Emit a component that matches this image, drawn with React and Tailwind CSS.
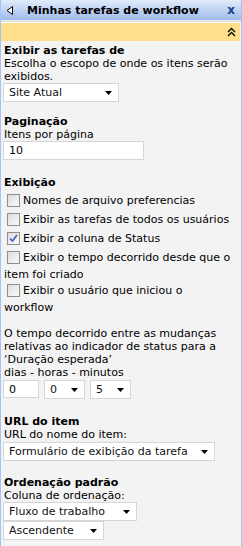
import React from 'react';

const font = { fontFamily: '"DejaVu Sans", Verdana, sans-serif' };

function Select({ value, className }) {
  return (
    <div className={`flex items-center justify-between bg-white border border-[#d6d6d6] h-[19px] pl-[5px] pr-[6px] ${className}`}>
      <span className="text-[11px] leading-[13px] text-[#111]">{value}</span>
      <svg width="7" height="4" viewBox="0 0 7 4" className="block shrink-0">
        <path d="M0 0 H7 L3.5 4 Z" fill="#000" />
      </svg>
    </div>
  );
}

function Checkbox({ checked }) {
  return (
    <span className="inline-block shrink-0 w-[13px] h-[13px] ml-[4px] mr-[3px] border border-[#8e8f8f] bg-gradient-to-br from-[#dcdcdc] to-[#fbfbfb] relative">
      {checked && (
        <svg width="11" height="11" viewBox="0 0 11 11" className="absolute left-0 top-0">
          <path d="M2 5.5 L4.5 8 L9 2" stroke="#3f5fb4" strokeWidth="1.6" fill="none" />
        </svg>
      )}
    </span>
  );
}

const options = [
  { label: 'Nomes de arquivo preferencias', checked: false },
  { label: 'Exibir as tarefas de todos os usuários', checked: false },
  { label: 'Exibir a coluna de Status', checked: true },
  { label: 'Exibir o tempo decorrido desde que o', more: 'item foi criado', checked: false },
  { label: 'Exibir o usuário que iniciou o', more: 'workflow', checked: false },
];

export default function App() {
  return (
    <div style={font} className="w-[242px] h-[546px] bg-[#f3f3f3] border-x border-[#a3c2f5] text-black overflow-hidden">
      {/* Title bar */}
      <div className="h-[20px] flex items-center bg-gradient-to-b from-[#e2ebfb] to-[#9fbbea] pl-[5px] pr-[6px]">
        <svg width="8" height="9" viewBox="0 0 8 9" className="block">
          <path d="M6.5 0.5 L1 4.5 L6.5 8.5 Z" fill="#fff" stroke="#000" strokeWidth="1" />
        </svg>
        <span className="ml-[13px] text-[11px] font-bold leading-[13px]">Minhas tarefas de workflow</span>
        <span className="ml-auto text-[12px] font-bold leading-[13px] text-[#1d3c8e]">x</span>
      </div>
      <div className="h-[3px] bg-[#e4e4e4] border-b border-[#fafafa]" />
      {/* Yellow header */}
      <div className="h-[18px] mr-[1px] bg-[#ffde8c] flex items-center justify-end pr-[4px]">
        <svg width="9" height="10" viewBox="0 0 9 10" className="block">
          <path d="M1 5 L4.5 1.5 L8 5 M1 9 L4.5 5.5 L8 9" stroke="#000" strokeWidth="1.3" fill="none" />
        </svg>
      </div>

      <div className="px-[2px] text-[11px] leading-[13px]">
        <div className="mt-[3px] pl-[1px] font-bold">Exibir as tarefas de</div>
        <div className="pl-[1px]">Escolha o escopo de onde os itens serão exibidos.</div>
        <Select value="Site Atual" className="w-[116px]" />

        <div className="mt-[13px] pl-[1px] font-bold">Paginação</div>
        <div className="pl-[1px]">Itens por página</div>
        <div className="w-[141px] h-[19px] bg-white border border-[#d6d6d6] pl-[5px] flex items-center">10</div>

        <div className="mt-[16px] pl-[1px] font-bold">Exibição</div>
        <div className="mt-[2px]">
          {options.map((o) => (
            <div key={o.label}>
              <div className="h-[19px] flex items-center">
                <Checkbox checked={o.checked} />
                <span>{o.label}</span>
              </div>
              {o.more && <div className="mt-[1px] pl-[1px]">{o.more}</div>}
            </div>
          ))}
        </div>

        <div className="mt-[13px] pl-[1px]">
          O tempo decorrido entre as mudanças relativas ao indicador de status para a ‘Duração esperada’
        </div>
        <div className="pl-[1px]">dias - horas - minutos</div>
        <div className="flex gap-[5px] mt-[1px]">
          <div className="w-[36px] h-[18px] bg-white border border-[#d6d6d6] pl-[5px] flex items-center">0</div>
          <Select value="0" className="w-[41px] h-[18px]" />
          <Select value="5" className="w-[41px] h-[18px]" />
        </div>

        <div className="mt-[16px] pl-[1px] font-bold">URL do item</div>
        <div className="pl-[1px]">URL do nome do item:</div>
        <Select value="Formulário de exibição da tarefa" className="w-[212px] mt-[1px]" />

        <div className="mt-[15px] pl-[1px] font-bold">Ordenação padrão</div>
        <div className="pl-[1px]">Coluna de ordenação:</div>
        <Select value="Fluxo de trabalho" className="w-[134px]" />
        <Select value="Ascendente" className="w-[101px]" />
      </div>
    </div>
  );
}
